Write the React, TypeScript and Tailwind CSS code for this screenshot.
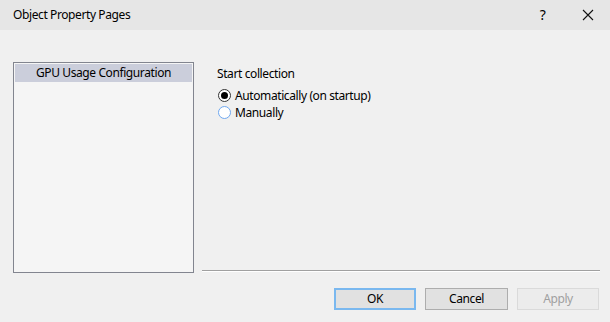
import React from "react";

export default function App() {
  const font = { fontFamily: '"Noto Sans", "Open Sans", sans-serif' };
  return (
    <div
      className="w-[610px] h-[322px] bg-[#f0f0f0] flex flex-col text-[12px] tracking-[-0.4px] text-[#000] overflow-hidden"
      style={font}
    >
      <div className="h-[30px] bg-[#e6e6e6] flex items-center shrink-0">
        <div className="pl-[13px] flex-1 leading-none">Object Property Pages</div>
        <div className="w-[45px] flex justify-center text-[14px] leading-none">?</div>
        <div className="w-[45px] flex justify-center">
          <svg width="12" height="12" viewBox="0 0 12 12">
            <path d="M1 1L11 11M11 1L1 11" stroke="#111" strokeWidth="1.1" />
          </svg>
        </div>
      </div>
      <div className="flex pt-[32px] pl-[13px] pr-[10px]">
        <div className="w-[181px] h-[211px] border border-[#82858f] bg-[#f5f5f5] p-[1px] shrink-0">
          <div className="h-[18px] bg-[#cbcedb] flex items-center justify-center leading-none">
            GPU Usage Configuration
          </div>
        </div>
        <div className="flex-1 ml-[8px] flex flex-col h-[210px]">
          <div className="flex-1 pl-[15px] pt-[4px]">
            <div className="leading-[16px]">Start collection</div>
            <div className="mt-[5px] flex items-center h-[17px]">
              <span className="w-[13px] h-[13px] rounded-full border border-[#333] flex items-center justify-center ml-[1px] bg-white">
                <span className="w-[7px] h-[7px] rounded-full bg-[#000]" />
              </span>
              <span className="ml-[4px]">Automatically (on startup)</span>
            </div>
            <div className="flex items-center h-[17px]">
              <span className="w-[13px] h-[13px] rounded-full border border-[#6fa8f0] ml-[1px] bg-white" />
              <span className="ml-[4px]">Manually</span>
            </div>
          </div>
          <div className="h-[1px] bg-[#a0a0a0]" />
          <div className="h-[1px] bg-[#ffffff]" />
        </div>
      </div>
      <div className="flex justify-end gap-[9px] pr-[11px] mt-[15px]">
        <div className="w-[82px] h-[22px] border-2 border-[#7ab8ef] bg-[#e1e1e1] flex items-center justify-center">
          OK
        </div>
        <div className="w-[83px] h-[22px] border border-[#adadad] bg-[#e1e1e1] flex items-center justify-center">
          Cancel
        </div>
        <div className="w-[82px] h-[22px] border border-[#dadada] bg-[#ececec] text-[#a0a0a0] flex items-center justify-center">
          Apply
        </div>
      </div>
    </div>
  );
}
